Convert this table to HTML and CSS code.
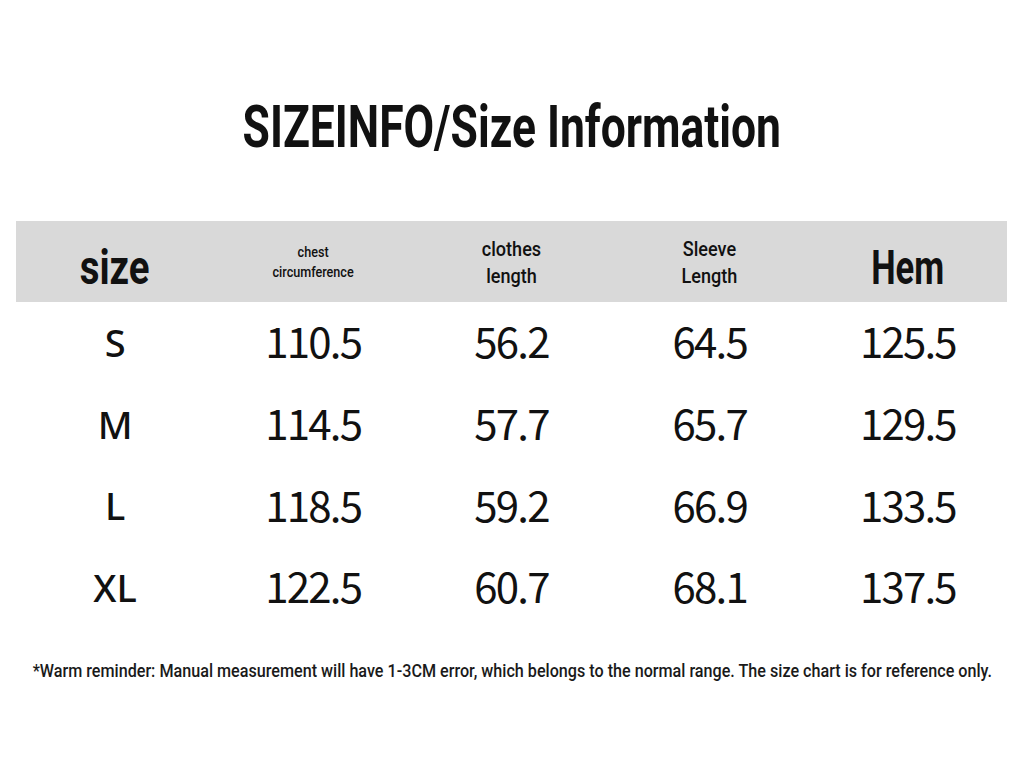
FILE: index.html
```html
<!DOCTYPE html>
<html lang="en">
<head>
<meta charset="utf-8">
<title>Size Information</title>
<link rel="stylesheet" href="styles.css">
</head>
<body>
<main class="page">
  <h1 class="title"><span class="cond">SIZEINFO/Size Information</span></h1>
  <div class="chart">
    <div class="row head">
      <div class="cell big"><span class="cond c-size">size</span></div>
      <div class="cell tiny"><span class="cond">chest<br>circumference</span></div>
      <div class="cell mid"><span class="cond">clothes<br>length</span></div>
      <div class="cell mid"><span class="cond">Sleeve<br>Length</span></div>
      <div class="cell big"><span class="cond c-hem">Hem</span></div>
    </div>
    <div class="row">
      <div class="cell label">S</div>
      <div class="cell num">110.5</div>
      <div class="cell num">56.2</div>
      <div class="cell num">64.5</div>
      <div class="cell num">125.5</div>
    </div>
    <div class="row">
      <div class="cell label">M</div>
      <div class="cell num">114.5</div>
      <div class="cell num">57.7</div>
      <div class="cell num">65.7</div>
      <div class="cell num">129.5</div>
    </div>
    <div class="row">
      <div class="cell label">L</div>
      <div class="cell num">118.5</div>
      <div class="cell num">59.2</div>
      <div class="cell num">66.9</div>
      <div class="cell num">133.5</div>
    </div>
    <div class="row">
      <div class="cell label">XL</div>
      <div class="cell num">122.5</div>
      <div class="cell num">60.7</div>
      <div class="cell num">68.1</div>
      <div class="cell num">137.5</div>
    </div>
  </div>
  <div class="note"><span class="cond">*Warm reminder: Manual measurement will have 1-3CM error, which belongs to the normal range. The size chart is for reference only.</span></div>
</main>
</body>
</html>
```
FILE: styles.css
```css
html, body {
  margin: 0;
  padding: 0;
  background: #ffffff;
  color: #111111;
}

.page {
  width: 1024px;
  height: 768px;
  display: flex;
  flex-direction: column;
  overflow: hidden;
}

.cond {
  display: inline-block;
  white-space: nowrap;
  transform-origin: center center;
}

.title {
  margin: 0;
  height: 221px;
  display: flex;
  align-items: center;
  justify-content: center;
  font-family: Roboto, "DejaVu Sans", sans-serif;
  font-weight: bold;
  font-size: 60px;
  line-height: 1;
  color: #111;
  padding-top: 32px;
  box-sizing: border-box;
}

.title .cond {
  transform: scaleX(0.74);
}

.chart {
  width: 991px;
  margin-left: 16px;
  display: flex;
  flex-direction: column;
}

.row {
  display: grid;
  grid-template-columns: repeat(5, 1fr);
  height: 81.7px;
  align-items: center;
}

.row.head {
  height: 81px;
  background: #d9d9d9;
}

.cell {
  text-align: center;
}

.head .cell {
  font-family: Roboto, "DejaVu Sans", sans-serif;
  color: #111;
}

.big {
  font-size: 48px;
  font-weight: bold;
  line-height: 1;
  padding-top: 12px;
}

.big .c-size {
  transform: scaleX(0.8);
}

.big .c-hem {
  transform: scaleX(0.72);
}

.tiny {
  font-size: 14px;
  line-height: 20px;
  font-weight: 500;
}

.tiny .cond {
  transform: scaleX(0.9);
}

.mid {
  font-size: 21px;
  line-height: 27px;
  font-weight: 500;
  padding-top: 2px;
}

.mid .cond {
  transform: scaleX(0.86);
}

.label {
  font-family: "Noto Sans", sans-serif;
  font-weight: 500;
  font-size: 38px;
  line-height: 1;
  padding-bottom: 2px;
}

.num {
  font-family: "Noto Sans CJK SC", "Noto Sans", sans-serif;
  font-size: 42px;
  letter-spacing: -1.8px;
  font-weight: 400;
  padding-bottom: 6px;
}

.note {
  margin-top: 30px;
  display: flex;
  justify-content: center;
  font-family: Roboto, "DejaVu Sans", sans-serif;
  font-weight: 500;
  font-size: 19px;
  color: #1a1a1a;
}

.note .cond {
  transform: scaleX(0.85);
}
```
